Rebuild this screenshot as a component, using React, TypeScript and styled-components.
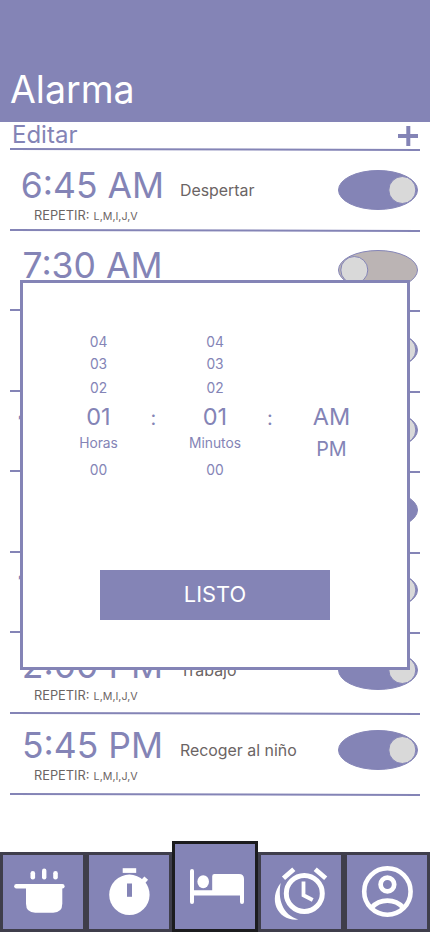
import React from "react";
import styled, { createGlobalStyle } from "styled-components";

const purple = "#8484b6";

const GlobalStyle = createGlobalStyle`
  *, *::before, *::after { box-sizing: border-box; }
  body { margin: 0; background: #fff; font-family: Inter, sans-serif; font-weight: 400; }
`;

const Screen = styled.div`
  position: relative;
  display: flex;
  flex-direction: column;
  width: 430px;
  height: 932px;
  overflow: hidden;
  background: #fff;
`;

const Header = styled.header`
  flex: none;
  display: flex;
  align-items: flex-end;
  height: 122px;
  padding: 0 10px 8px;
  background: ${purple};
`;

const Title = styled.h1`
  margin: 0;
  font-size: 37.5px;
  line-height: 48px;
  font-weight: 400;
  color: #fff;
`;

const Toolbar = styled.div`
  flex: none;
  display: flex;
  justify-content: space-between;
  height: 26px;
  padding: 0 12px;
`;

const EditButton = styled.button`
  padding: 0;
  border: 0;
  background: none;
  font: 400 24px/26px Inter, sans-serif;
  color: ${purple};
`;

const AddButton = styled.button`
  display: flex;
  padding: 4px 0 0;
  border: 0;
  background: none;
`;

const Rule = styled.svg<{ $drop?: number }>`
  flex: none;
  display: block;
  width: 410px;
  height: 3px;
  margin: ${(p) => p.$drop ?? 0}px 10px 0;
`;

const List = styled.main`
  flex: 1;
  display: flex;
  flex-direction: column;
  margin-top: -1px;
`;

const Row = styled.article`
  flex: none;
  height: 80px;
`;

const RowBody = styled.div`
  display: grid;
  grid-template-columns: 149px 151px 80px;
  column-gap: 10px;
  height: 79px;
  padding: 14px 12px 0 18px;
`;

const TimeBlock = styled.div`
  display: flex;
  flex-direction: column;
`;

const Time = styled.div`
  display: flex;
  justify-content: center;
  font-size: 35.5px;
  line-height: 44px;
  white-space: nowrap;
  color: ${purple};
`;

const Repeat = styled.div`
  padding-left: 16px;
  font-size: 12.8px;
  line-height: 15px;
  color: #6b6464;
`;

const Days = styled.span`
  margin-left: 0.6px;
  font-size: 10.7px;
`;

const Label = styled.div`
  padding: 17px 0 0 3px;
  font-size: 15.9px;
  line-height: 20px;
  color: #6b6464;
`;

const Switch = styled.button`
  display: block;
  width: 80px;
  height: 40px;
  margin-top: 6px;
  padding: 0;
  border: 0;
  background: none;
`;

const Dialog = styled.section`
  position: absolute;
  top: 280px;
  left: 20px;
  display: flex;
  flex-direction: column;
  align-items: center;
  justify-content: space-between;
  width: 390px;
  height: 390px;
  padding: 48px 0 47px;
  border: 3px solid ${purple};
  background: #fff;
`;

const Picker = styled.div`
  display: grid;
  grid-template-columns: 78px 32px 91px 19px 104px;
  width: 100%;
  padding-left: 36.5px;
  color: ${purple};
`;

const Wheel = styled.div`
  display: flex;
  flex-direction: column;
  align-items: center;
`;

const Option = styled.div<{ $size?: number; $height: number }>`
  font-size: ${(p) => p.$size ?? 13.8}px;
  line-height: ${(p) => p.$height}px;
  height: ${(p) => p.$height}px;
`;

const Colon = styled.div`
  padding-top: 71px;
  text-align: center;
  font-size: 20px;
  line-height: 32px;
`;

const Meridiem = styled(Wheel)`
  padding-top: 70px;
`;

const DoneButton = styled.button`
  width: 230px;
  height: 50px;
  padding: 0 0 2px;
  border: 0;
  background: ${purple};
  color: #fff;
  font: 400 21.8px/48px Inter, sans-serif;
`;

const TabBar = styled.nav`
  flex: none;
  display: grid;
  grid-template-columns: repeat(5, 86px);
  align-items: end;
  height: 91px;
`;

const Tab = styled.button<{ $active?: boolean }>`
  display: flex;
  height: ${(p) => (p.$active ? 91 : 80)}px;
  padding: 0;
  border: 3px solid ${(p) => (p.$active ? "#1c1c1e" : "#3f3e4b")};
  background: ${purple};
`;

const Glyph = styled.svg`
  flex: none;
  display: block;
  width: 80px;
  height: 74px;
`;

const BedGlyph = styled(Glyph)`
  height: 85px;
`;

const alarms = [
  { time: "6:45 AM", label: "Despertar", on: true, drop: 0 },
  { time: "7:30 AM", label: "", on: false, drop: 0 },
  { time: "8:00 AM", label: "Escuela", on: true, drop: 1 },
  { time: "11:00 AM", label: "Reunión", on: true, drop: 1 },
  { time: "9:30 AM", label: "Descanso", on: true, knobLeft: true, drop: 2 },
  { time: "10:10 AM", label: "Comida", on: true, drop: 2 },
  { time: "2:00 PM", label: "Trabajo", on: true, drop: 3 },
  { time: "5:45 PM", label: "Recoger al niño", on: true, drop: 4 },
];

function Separator({ drop }: { drop?: number }) {
  return (
    <Rule $drop={drop} viewBox="0 0 410 3">
      <line x1="0" y1="1" x2="410" y2="2" stroke={purple} strokeWidth="2" />
    </Rule>
  );
}

function AlarmSwitch({ on, knobLeft }: { on: boolean; knobLeft?: boolean }) {
  return (
    <Switch role="switch" aria-checked={on}>
      <svg width="80" height="40" viewBox="0 0 80 40">
        <ellipse cx="40" cy="20" rx="39.5" ry="19.5" fill={on ? purple : "#bbb4b4"} stroke={purple} />
        <circle cx={on && !knobLeft ? 64.3 : 16.3} cy="20" r="13.5" fill="#d9d9d9" stroke={purple} />
      </svg>
    </Switch>
  );
}

function NumberWheel({ name }: { name: string }) {
  return (
    <Wheel>
      <Option $height={22}>04</Option>
      <Option $height={22}>03</Option>
      <Option $height={26}>02</Option>
      <Option $height={32} $size={23.5}>01</Option>
      <Option $height={20}>{name}</Option>
      <Option $height={34}>00</Option>
    </Wheel>
  );
}

export default function App() {
  return (
    <>
      <GlobalStyle />
      <Screen>
        <Header>
          <Title>Alarma</Title>
        </Header>
        <Toolbar>
          <EditButton>Editar</EditButton>
          <AddButton aria-label="Agregar">
            <svg width="20" height="20" viewBox="0 0 20 20">
              <path d="M0 10H20M10.3 0V20" stroke={purple} strokeWidth="4" />
            </svg>
          </AddButton>
        </Toolbar>
        <Separator />
        <List>
          {alarms.map((a) => (
            <Row key={a.time}>
              <RowBody>
                <TimeBlock>
                  <Time>{a.time}</Time>
                  <Repeat>
                    REPETIR: <Days>L,M,I,J,V</Days>
                  </Repeat>
                </TimeBlock>
                <Label>{a.label}</Label>
                <AlarmSwitch on={a.on} knobLeft={a.knobLeft} />
              </RowBody>
              <Separator drop={a.drop} />
            </Row>
          ))}
        </List>
        <TabBar>
          <Tab aria-label="Cocina">
            <Glyph viewBox="0 0 80 74" fill="#fff">
              <rect x="27.5" y="16" width="4.6" height="8.5" rx="2.3" />
              <rect x="39" y="13.5" width="4.4" height="11" rx="2.2" />
              <rect x="50.2" y="16" width="4.6" height="8.5" rx="2.3" />
              <rect x="11.2" y="29" width="50.4" height="4.4" rx="2.2" />
              <path d="M23 31H59.3V48.5Q59.3 57.7 50.2 57.7H32.2Q23 57.7 23 48.5Z" />
            </Glyph>
          </Tab>
          <Tab aria-label="Cronómetro">
            <Glyph viewBox="0 0 80 74" fill="#fff">
              <rect x="33.7" y="13.2" width="13.5" height="4.7" />
              <circle cx="40.4" cy="39.8" r="20.2" />
              <path d="M52 29L57.2 23.2" stroke="#fff" strokeWidth="5" />
              <rect x="38" y="28.5" width="5" height="13.3" fill={purple} />
            </Glyph>
          </Tab>
          <Tab $active aria-label="Dormir">
            <BedGlyph viewBox="0 0 80 85" fill="#fff">
              <rect x="15" y="25" width="4" height="35" rx="2" />
              <ellipse cx="28.2" cy="37.7" rx="5.8" ry="6.5" />
              <path d="M37.2 46.3V32.2Q37.2 30 39.4 30H64Q69 30 69 35V58Q69 60 67 60T65 58V51.5H18V46.3Z" />
            </BedGlyph>
          </Tab>
          <Tab aria-label="Alarmas">
            <Glyph viewBox="0 0 80 74" fill="none" stroke="#fff">
              <circle cx="43.3" cy="38.4" r="18" strokeWidth="5" />
              <path d="M42.5 26.5V40.3L51.7 45" strokeWidth="3.8" />
              <path d="M22.5 23.3L32.8 14.2M54.2 14.2L64.7 23.3" strokeWidth="4.8" />
              <path d="M19.7 28C6.5 45 17 66.5 37.5 64.5C21.5 60 16.5 44 19.7 28Z" fill="#fff" stroke="none" />
            </Glyph>
          </Tab>
          <Tab aria-label="Perfil">
            <Glyph viewBox="0 0 80 74" fill="none" stroke="#fff">
              <circle cx="40.4" cy="36.5" r="23.2" strokeWidth="4.6" />
              <circle cx="40.4" cy="29.5" r="6.8" strokeWidth="4.7" />
              <path d="M24.8 52.5C32.5 43.2 48.3 43.2 56 52.5" strokeWidth="4.7" />
            </Glyph>
          </Tab>
        </TabBar>
        <Dialog role="dialog">
          <Picker>
            <NumberWheel name="Horas" />
            <Colon>:</Colon>
            <NumberWheel name="Minutos" />
            <Colon>:</Colon>
            <Meridiem>
              <Option $height={32} $size={23.5}>AM</Option>
              <Option $height={32} $size={19.8}>PM</Option>
            </Meridiem>
          </Picker>
          <DoneButton>LISTO</DoneButton>
        </Dialog>
      </Screen>
    </>
  );
}
